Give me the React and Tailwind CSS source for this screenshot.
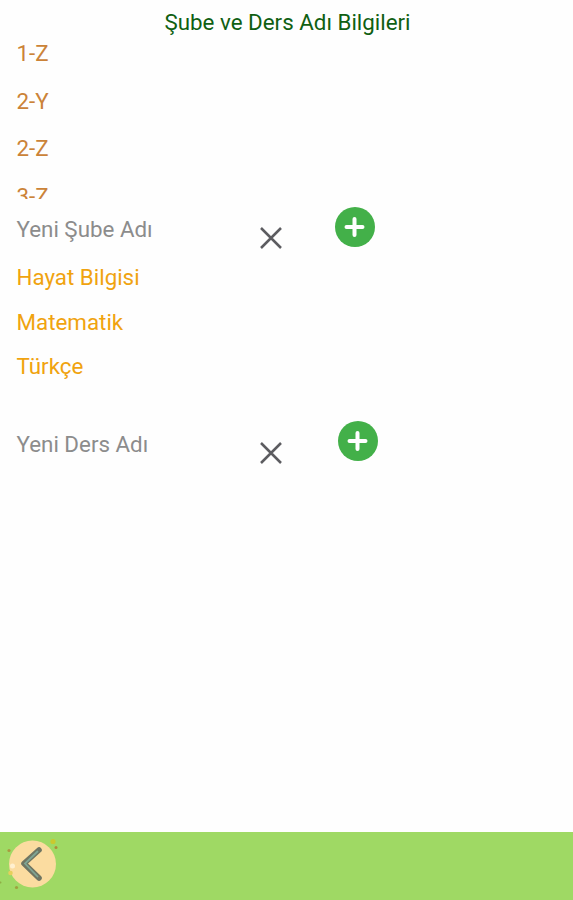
import React from 'react';

const branches = ['1-Z', '2-Y', '2-Z', '3-Z'];
const lessons = ['Hayat Bilgisi', 'Matematik', 'Türkçe'];

const ClearIcon = () => (
  <svg width="24" height="24" viewBox="0 0 24 24" fill="none" stroke="#5c5c60" strokeWidth="2.5">
    <path d="M2 2 22 22M22 2 2 22" />
  </svg>
);

const AddIcon = () => (
  <svg width="40" height="40" viewBox="0 0 40 40">
    <circle cx="20" cy="20" r="20" fill="#43b049" />
    <path d="M19.500 12v16M11.500 20h16" stroke="#fff" strokeWidth="4" strokeLinecap="round" />
  </svg>
);

const BackIcon = () => (
  <svg width="64" height="60" viewBox="0 0 64 60" fill="none">
    <circle cx="32.5" cy="32" r="23.5" fill="#fbdca0" />
    {/* confetti around the badge */}
    <circle cx="53" cy="9.500" r="2.600" fill="#c9c92f" />
    <circle cx="56" cy="15.500" r="1.500" fill="#b08a38" />
    <circle cx="9" cy="18.500" r="1.600" fill="#a99a40" />
    <circle cx="12.500" cy="34" r="2.500" fill="#fff0cf" />
    <circle cx="10.500" cy="41" r="2.300" fill="#e6cf5c" />
    <circle cx="16.500" cy="55.500" r="1.600" fill="#9fa03e" />
    <circle cx="0.500" cy="50.500" r="1" fill="#8fae45" />
    <path d="M39 18 24 31.500 39 46" stroke="#6f7562" strokeWidth="5.600" strokeLinecap="round" strokeLinejoin="round" />
    <path d="M37.500 19.500 25 31.500 37.500 44.500" stroke="#7fa594" strokeWidth="1.800" strokeLinecap="round" />
  </svg>
);

const NewEntryRow = ({ placeholder, addClass }) => (
  <div className="flex h-14 shrink-0 items-start pl-[16.5px]">
    <span className="w-[242.5px] pt-[14px] leading-8 text-[#8c8c8c]">{placeholder}</span>
    <button type="button" aria-label="Temizle" className="mt-[27px]">
      <ClearIcon />
    </button>
    <button type="button" aria-label="Ekle" className={addClass}>
      <AddIcon />
    </button>
  </div>
);

const App = () => {
  return (
    <div className="flex h-screen flex-col overflow-hidden bg-[#fefefe] font-['Roboto',sans-serif] text-[22.35px]">
      <h1 className="h-[30px] shrink-0 pt-[6px] pl-[2px] text-center leading-8 text-[#0f5f12]">
        Şube ve Ders Adı Bilgileri
      </h1>

      <ul className="h-[169px] shrink-0 overflow-hidden pl-[16.5px] text-[#cb8338]">
        {branches.map((name) => (
          <li key={name} className="h-[47.5px] leading-[47.5px]">{name}</li>
        ))}
      </ul>
      <NewEntryRow placeholder="Yeni Şube Adı" addClass="ml-[52px] mt-2" />

      <ul className="h-[159px] shrink-0 pl-[16.5px] text-[#f0a30f]">
        {lessons.map((name) => (
          <li key={name} className="h-[44.5px] leading-[44px]">{name}</li>
        ))}
      </ul>
      <NewEntryRow placeholder="Yeni Ders Adı" addClass="ml-[55px] mt-[7px]" />

      <footer className="mt-auto h-[68px] shrink-0 bg-[#9fd964]">
        <button type="button" aria-label="Geri" className="block">
          <BackIcon />
        </button>
      </footer>
    </div>
  );
};

export default App;
